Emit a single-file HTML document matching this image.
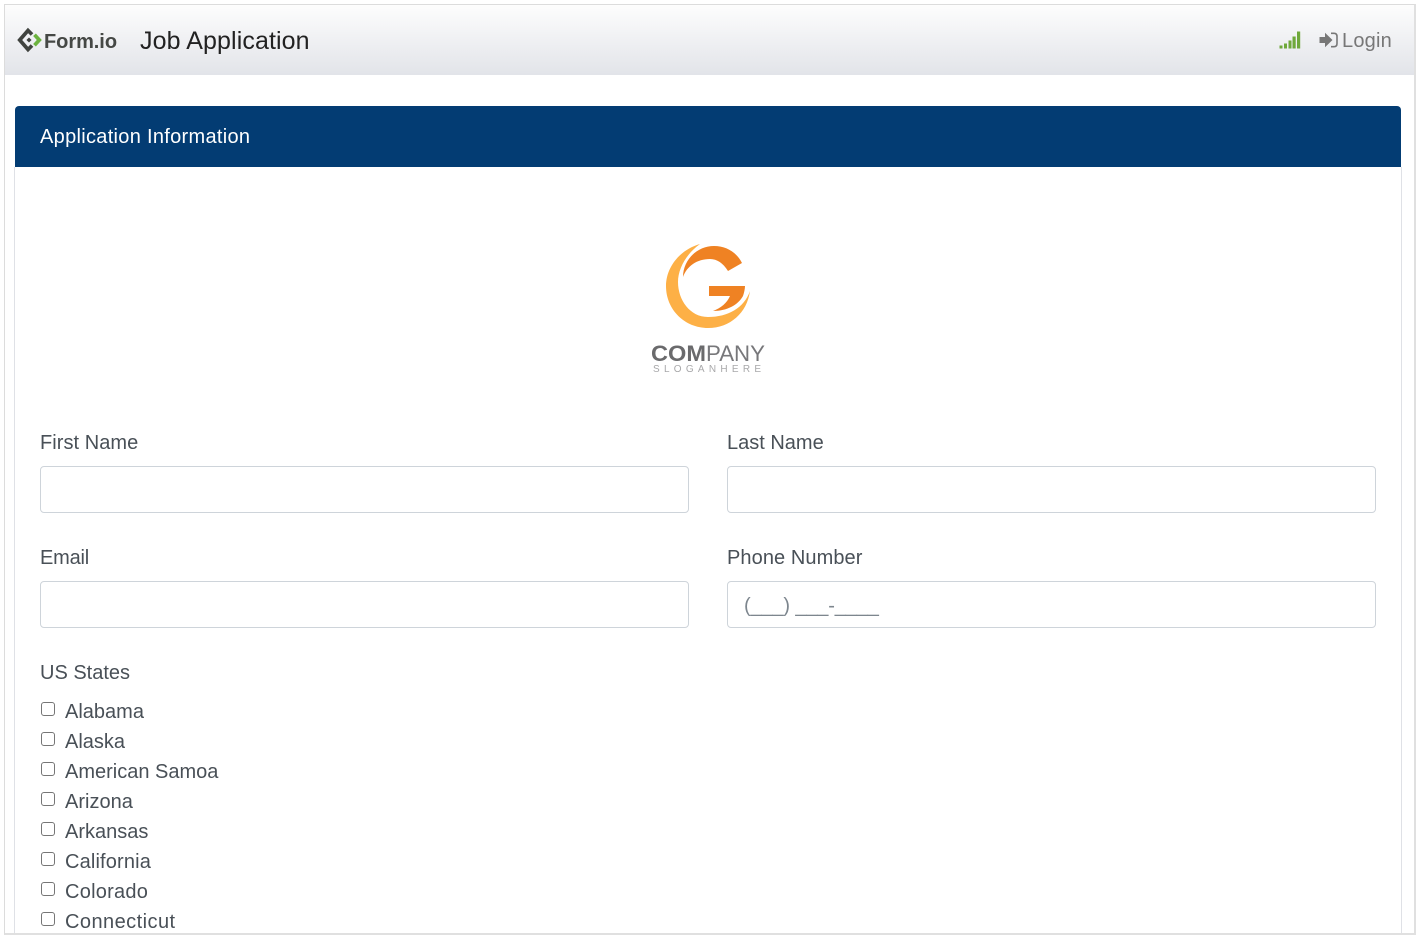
<!DOCTYPE html>
<html lang="en">
<head>
<meta charset="utf-8">
<title>Job Application</title>
<style>
html,body{margin:0;padding:0;width:1420px;height:939px;overflow:hidden;background:#fff;font-family:"Liberation Sans",sans-serif;color:#495057;}
*{box-sizing:border-box;}
.a{position:absolute;white-space:nowrap;}
#win{position:absolute;left:4px;top:4px;width:1412px;height:931px;background:#fff;overflow:hidden;}
#edge{position:absolute;left:4px;top:4px;width:1412px;height:931px;border:1px solid #dcdcdc;border-right:2px solid #e0e0e0;border-bottom:2px solid #e0e0e0;z-index:9;pointer-events:none;}
#nav{position:absolute;left:5px;top:5px;width:1410px;height:70px;background:linear-gradient(#fdfdfd,#e2e4e9);}
#head{position:absolute;left:15px;top:106px;width:1386px;height:61px;background:#033c73;border-radius:4px 4px 0 0;}
#cardl{position:absolute;left:14px;top:167px;width:1px;height:768px;background:#dfe1e6;}
#cardr{position:absolute;left:1401px;top:167px;width:1px;height:768px;background:#dfe1e6;}
.input{position:absolute;height:47px;width:649px;border:1px solid #ced4da;border-radius:4px;background:#fff;}
.lbl{position:absolute;font-size:20px;line-height:24px;white-space:nowrap;color:#495057;}
.cb{position:absolute;left:41px;width:14px;height:14px;border:1px solid #767676;border-radius:3px;background:#fff;}
</style>
</head>
<body>
<div id="win"></div>
<div id="nav"></div>
<div id="edge"></div>

<svg class="a" style="left:17px;top:27px" width="26" height="26" viewBox="0 0 26 26">
<path d="M15 7.500 L11 3.500 L2.700 13 L11 22.500 L15 18.500" fill="none" stroke="#40433f" stroke-width="3.700"/>
<path d="M17.500 7.800 L22.300 13 L17.500 18.200" fill="none" stroke="#6cb33f" stroke-width="3.700"/>
<rect x="10.200" y="11.200" width="3.600" height="3.600" transform="rotate(45 12 13)" fill="#40433f"/>
</svg>
<div class="a" style="left:44px;top:30px;font-size:20px;line-height:24px;font-weight:bold;color:#454845;letter-spacing:-.05px">Form.io</div>
<div class="a" style="left:140px;top:26px;font-size:25px;line-height:30px;color:#222;letter-spacing:.1px">Job Application</div>

<svg class="a" style="left:1278px;top:30px" width="24" height="20" viewBox="0 0 24 20">
<g fill="#6fa83a"><rect x="1.500" y="15.500" width="3" height="3"/><rect x="6" y="13.500" width="3" height="5"/><rect x="10.500" y="10.500" width="3" height="8"/><rect x="14.500" y="6.500" width="3.200" height="12"/><rect x="19" y="1.500" width="3.200" height="17"/></g>
</svg>
<svg class="a" style="left:1319px;top:32px" width="20" height="16" viewBox="0 0 20 16">
<path d="M0.500 5 H6 V0.800 L13.500 8 L6 15.200 V11 H0.500 Z" fill="#777"/>
<path d="M12 1.300 H15 Q18 1.300 18 4.500 V11.500 Q18 14.700 15 14.700 H12" fill="none" stroke="#777" stroke-width="1.600"/>
</svg>
<div class="a" style="left:1342px;top:29px;font-size:20px;line-height:24px;color:#777;letter-spacing:.2px">Login</div>

<div id="head"></div>
<div class="a" style="left:40px;top:125px;font-size:20px;line-height:24px;color:#fff;letter-spacing:.3px">Application Information</div>
<div id="cardl"></div><div id="cardr"></div>

<svg class="a" style="left:650px;top:240px" width="118" height="140" viewBox="0 0 118 140">
<path d="M50 4 C29 10 16 28 16 46 C16 70 35 88 58 88 C80 88 97 73 100 51 C94 68 78 77 58 77 C40 77 28 60 28 42 C28 29 36 14 50 4 Z" fill="#fdb046"/>
<path d="M33 37 C33 20 47 6 64 6 C77 6 87 13 92 23 L78 31 C73 23 67 19 60 19 C47 19 37 26 33 37 Z" fill="#ef8223"/>
<path d="M59 46 H95 C95 49 94 53 93 56 C88 65 77 71 63 71 C71 68 77 63 80 56 H59 Z" fill="#ef8223"/>
<text x="1" y="121" font-family="Liberation Sans,sans-serif" font-size="22" font-weight="bold" fill="#6a6a6c" textLength="55" lengthAdjust="spacingAndGlyphs">COM</text>
<text x="56" y="121" font-family="Liberation Sans,sans-serif" font-size="22" fill="#77777a" textLength="59" lengthAdjust="spacingAndGlyphs">PANY</text>
<text x="3" y="132" font-family="Liberation Sans,sans-serif" font-size="10" fill="#a8a8aa" textLength="108" lengthAdjust="spacing">SLOGANHERE</text>
</svg>

<div class="lbl" style="left:40px;top:431px;letter-spacing:.05px">First Name</div>
<div class="lbl" style="left:727px;top:431px">Last Name</div>
<div class="input" style="left:40px;top:466px"></div>
<div class="input" style="left:727px;top:466px"></div>
<div class="lbl" style="left:40px;top:546px;letter-spacing:-.2px">Email</div>
<div class="lbl" style="left:727px;top:546px;letter-spacing:.08px">Phone Number</div>
<div class="input" style="left:40px;top:581px"></div>
<div class="input" style="left:727px;top:581px"></div>
<div class="a" style="left:744px;top:594px;font-size:20px;line-height:24px;color:#7d868e;letter-spacing:-.15px">(___) ___-____</div>

<div class="lbl" style="left:40px;top:661px">US States</div>
<div class="cb" style="top:702px"></div><div class="lbl" style="left:65px;top:700px">Alabama</div>
<div class="cb" style="top:732px"></div><div class="lbl" style="left:65px;top:730px">Alaska</div>
<div class="cb" style="top:762px"></div><div class="lbl" style="left:65px;top:760px">American Samoa</div>
<div class="cb" style="top:792px"></div><div class="lbl" style="left:65px;top:790px">Arizona</div>
<div class="cb" style="top:822px"></div><div class="lbl" style="left:65px;top:820px">Arkansas</div>
<div class="cb" style="top:852px"></div><div class="lbl" style="left:65px;top:850px;letter-spacing:.15px">California</div>
<div class="cb" style="top:882px"></div><div class="lbl" style="left:65px;top:880px;letter-spacing:.25px">Colorado</div>
<div class="cb" style="top:912px"></div><div class="lbl" style="left:65px;top:910px;letter-spacing:.45px">Connecticut</div>
<div style="position:absolute;left:0;top:936px;width:1420px;height:3px;background:#fff;z-index:10"></div>
</body>
</html>
